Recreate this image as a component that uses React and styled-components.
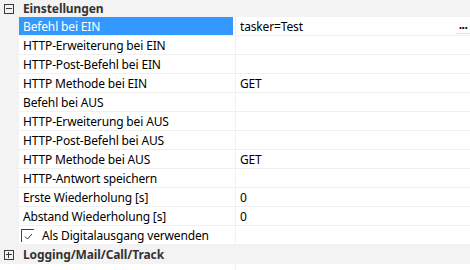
import React from 'react'
import styled, { createGlobalStyle } from 'styled-components'

const GlobalStyle = createGlobalStyle`
  html, body {
    margin: 0;
    padding: 0;
    background: #ffffff;
  }
  body {
    font-family: "Noto Sans", "Liberation Sans", sans-serif;
    font-size: 12px;
    color: #000;
  }
`

const Grid = styled.div`
  width: 470px;
  height: 270px;
  overflow: hidden;
  background: #fff;
`

const GroupRow = styled.div`
  display: flex;
  align-items: center;
  height: ${p => p.$h || 17}px;
  background: #f3f3f3;
`

const ToggleBox = styled.span`
  position: relative;
  box-sizing: border-box;
  width: 10px;
  height: 10px;
  margin-left: 4px;
  margin-right: 9px;
  border: 1px solid #3a3a3a;
  flex: none;

  &::before {
    content: '';
    position: absolute;
    left: 1px;
    right: 1px;
    top: 3px;
    height: 1px;
    background: #3a3a3a;
  }
  &::after {
    content: '';
    display: ${p => (p.$open ? 'none' : 'block')};
    position: absolute;
    top: 1px;
    bottom: 1px;
    left: 3px;
    width: 1px;
    background: #3a3a3a;
  }
`

const GroupTitle = styled.span`
  font-weight: 700;
  color: #333;
  letter-spacing: -0.1px;
`

const Row = styled.div`
  display: flex;
  height: ${p => p.$h || 19}px;
`

const Gutter = styled.div`
  width: 19px;
  flex: none;
  background: ${p => (p.$blank ? '#fff' : '#f3f3f3')};
`

const Label = styled.div`
  box-sizing: border-box;
  width: ${p => (p.$selected ? 214 : 216)}px;
  margin-right: ${p => (p.$selected ? 2 : 0)}px;
  flex: none;
  display: flex;
  align-items: center;
  padding-left: ${p => p.$pad ?? 4}px;
  border-bottom: ${p => (p.$plain ? 'none' : '1px solid #f0f0f0')};
  background: ${p => (p.$selected ? '#3399ff' : '#fff')};
  color: ${p => (p.$selected ? '#fff' : '#000')};
  white-space: nowrap;
  letter-spacing: -0.15px;
`

const Divider = styled.div`
  width: 1px;
  flex: none;
  background: #f0f0f0;
`

const Value = styled.div`
  position: relative;
  flex: 1;
  display: flex;
  align-items: center;
  padding-left: 4px;
  border-bottom: 1px solid #f0f0f0;
  letter-spacing: -0.15px;
  white-space: nowrap;
`

const EllipsisButton = styled.span`
  position: absolute;
  right: 0;
  top: 3px;
  width: 14px;
  height: 14px;
  box-sizing: border-box;
  border-bottom: 1px solid #e3e3e3;
  font-size: 12px;
  font-weight: 700;
  line-height: 9px;
  text-align: center;
  letter-spacing: -0.5px;
  color: #000;
`

const CheckBox = styled.span`
  position: relative;
  box-sizing: border-box;
  width: 13px;
  height: 13px;
  margin-right: 8px;
  border-top: 1px solid #444;
  border-left: 1px solid #444;
  flex: none;

  svg {
    position: absolute;
    left: 1px;
    top: 1px;
  }
`

const rows = [
  ['Befehl bei EIN', 'tasker=Test', true],
  ['HTTP-Erweiterung bei EIN', ''],
  ['HTTP-Post-Befehl bei EIN', ''],
  ['HTTP Methode bei EIN', 'GET'],
  ['Befehl bei AUS', ''],
  ['HTTP-Erweiterung bei AUS', ''],
  ['HTTP-Post-Befehl bei AUS', ''],
  ['HTTP Methode bei AUS', 'GET'],
  ['HTTP-Antwort speichern', ''],
  ['Erste Wiederholung [s]', '0'],
  ['Abstand Wiederholung [s]', '0'],
]

export default function App() {
  return (
    <>
      <GlobalStyle />
      <Grid>
        <GroupRow $h={17}>
          <ToggleBox $open />
          <GroupTitle>Einstellungen</GroupTitle>
        </GroupRow>
        {rows.map(([label, value, selected]) => (
          <Row key={label}>
            <Gutter />
            <Label $selected={selected}>{label}</Label>
            <Divider />
            <Value>
              {value}
              {selected && <EllipsisButton>...</EllipsisButton>}
            </Value>
          </Row>
        ))}
        <Row>
          <Gutter />
          <Label $pad={2}>
            <CheckBox>
              <svg width="11" height="11" viewBox="0 0 11 11">
                <path d="M2 5.5 L4.5 8 L9 3" fill="none" stroke="#333" strokeWidth="1" />
              </svg>
            </CheckBox>
            Als Digitalausgang verwenden
          </Label>
          <Divider />
          <Value />
        </Row>
        <GroupRow $h={19}>
          <ToggleBox />
          <GroupTitle>Logging/Mail/Call/Track</GroupTitle>
        </GroupRow>
        <Row $h={7}>
          <Gutter $blank />
          <Label $plain />
          <Divider />
        </Row>
      </Grid>
    </>
  )
}
